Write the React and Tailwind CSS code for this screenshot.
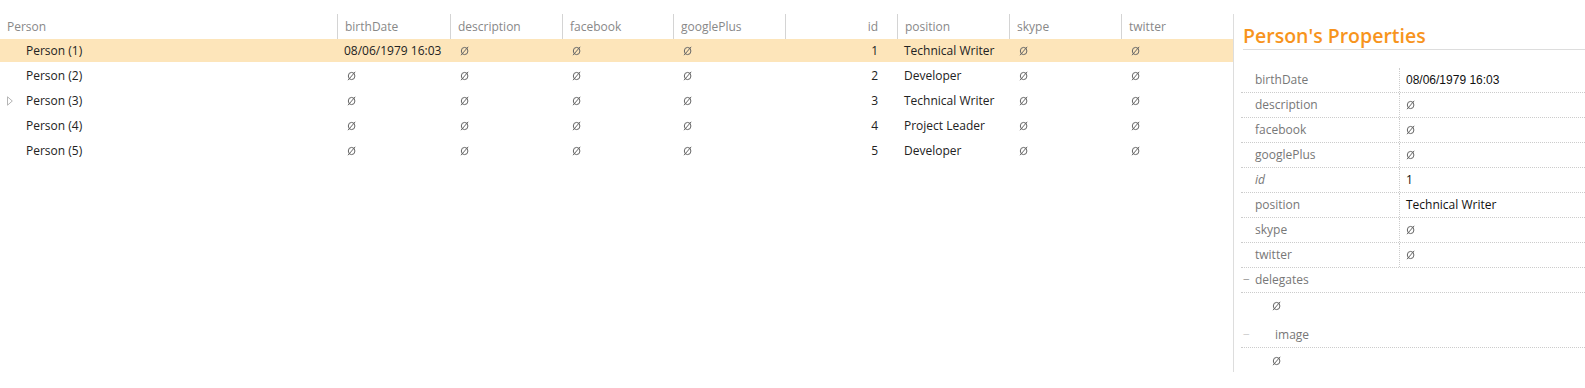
import React from "react";

const columns = [
  { key: "birthDate", width: "w-[113px]" },
  { key: "description", width: "w-[112px]" },
  { key: "facebook", width: "w-[111px]" },
  { key: "googlePlus", width: "w-[112px]" },
  { key: "id", width: "w-[112px]", right: true },
  { key: "position", width: "w-[112px]" },
  { key: "skype", width: "w-[112px]" },
  { key: "twitter", width: "w-[112px]" },
];

const people = [
  { name: "Person (1)", birthDate: "08/06/1979 16:03", id: "1", position: "Technical Writer", selected: true },
  { name: "Person (2)", id: "2", position: "Developer" },
  { name: "Person (3)", id: "3", position: "Technical Writer", expandable: true },
  { name: "Person (4)", id: "4", position: "Project Leader" },
  { name: "Person (5)", id: "5", position: "Developer" },
];

const props = [
  { label: "birthDate", value: "08/06/1979 16:03", date: true },
  { label: "description" },
  { label: "facebook" },
  { label: "googlePlus" },
  { label: "id", value: "1", italic: true },
  { label: "position", value: "Technical Writer" },
  { label: "skype" },
  { label: "twitter" },
];

function Null() {
  return (
    <svg width="9" height="10" viewBox="0 0 9 10" className="inline-block">
      <ellipse cx="4.6" cy="5" rx="3.3" ry="3.6" fill="none" stroke="#666" strokeWidth="1" />
      <line x1="1" y1="9.2" x2="8.2" y2="0.8" stroke="#666" strokeWidth="1" />
    </svg>
  );
}

function Cell({ col, person }) {
  const value = person[col.key];
  if (col.right) {
    return (
      <div className={`${col.width} shrink-0 pr-[19px] text-right`}>{value}</div>
    );
  }
  return (
    <div className={`${col.width} shrink-0 pl-[7px] whitespace-nowrap overflow-hidden`}>
      {value ? value : <span className="pl-[3px]"><Null /></span>}
    </div>
  );
}

export default function App() {
  return (
    <div
      className="w-[1585px] h-[388px] bg-white flex pt-[14px] text-[12px] text-[#222] overflow-hidden"
      style={{ fontFamily: '"Open Sans", sans-serif' }}
    >
      {/* grid */}
      <div className="w-[1233px] shrink-0">
        <div className="flex h-[25px] items-center text-[#888]">
          <div className="w-[337px] shrink-0 pl-[7px] h-full flex items-center">Person</div>
          {columns.map((col) => (
            <div
              key={col.key}
              className={`${col.width} shrink-0 h-full flex items-center border-l border-[#d4d4d4] ${
                col.right ? "justify-end pr-[19px]" : "pl-[7px]"
              }`}
            >
              {col.key}
            </div>
          ))}
        </div>
        {people.map((p) => (
          <div
            key={p.name}
            className={`flex h-[23px] mb-[2px] items-center ${p.selected ? "bg-[#fde5ba]" : ""}`}
          >
            <div className="w-[337px] shrink-0 flex items-center">
              <div className="w-[26px] pl-[7px] flex items-center">
                {p.expandable && (
                  <svg width="6" height="10" viewBox="0 0 6 10">
                    <path d="M0.5 0.8 L5.3 5 L0.5 9.2 Z" fill="none" stroke="#b5b5b5" strokeWidth="1" />
                  </svg>
                )}
              </div>
              {p.name}
            </div>
            {columns.map((col) => (
              <Cell key={col.key} col={col} person={p} />
            ))}
          </div>
        ))}
      </div>

      {/* properties panel */}
      <div className="flex-1 border-l border-[#ddd] h-[358px]">
        <div className="ml-[9px] pt-[9px] h-[36px] border-b border-[#ddd] text-[19.5px] font-semibold text-[#f7941d] leading-[26px]">
          Person's Properties
        </div>
        <div className="ml-[7px] mt-[18px]">
          {props.map((r) => (
            <div key={r.label} className="flex h-[25px] border-b border-dotted border-[#ccc]">
              <div className={`w-[158px] shrink-0 pl-[14px] flex items-center text-[#777] ${r.italic ? "italic" : ""}`}>
                {r.label}
              </div>
              <div className="flex-1 border-l border-dotted border-[#ccc] pl-[6px] flex items-center text-[#111]">
                {r.value ? (
                  <span
                    style={r.date ? { fontFamily: '"Liberation Sans", Arial, sans-serif' } : undefined}
                  >
                    {r.value}
                  </span>
                ) : (
                  <Null />
                )}
              </div>
            </div>
          ))}
          <div className="flex h-[25px] items-center border-b border-dotted border-[#ccc] text-[#777]">
            <span className="w-[14px] pl-[2px] text-[#999]">−</span>
            <span>delegates</span>
          </div>
          <div className="h-[25px] flex items-center pl-[31px]">
            <Null />
          </div>
          <div className="flex h-[25px] mt-[5px] items-center border-b border-dotted border-[#ccc] text-[#777]">
            <span className="w-[34px] pl-[2px] text-[#ccc]">−</span>
            <span>image</span>
          </div>
          <div className="h-[25px] flex items-center pl-[31px]">
            <Null />
          </div>
        </div>
      </div>
    </div>
  );
}
